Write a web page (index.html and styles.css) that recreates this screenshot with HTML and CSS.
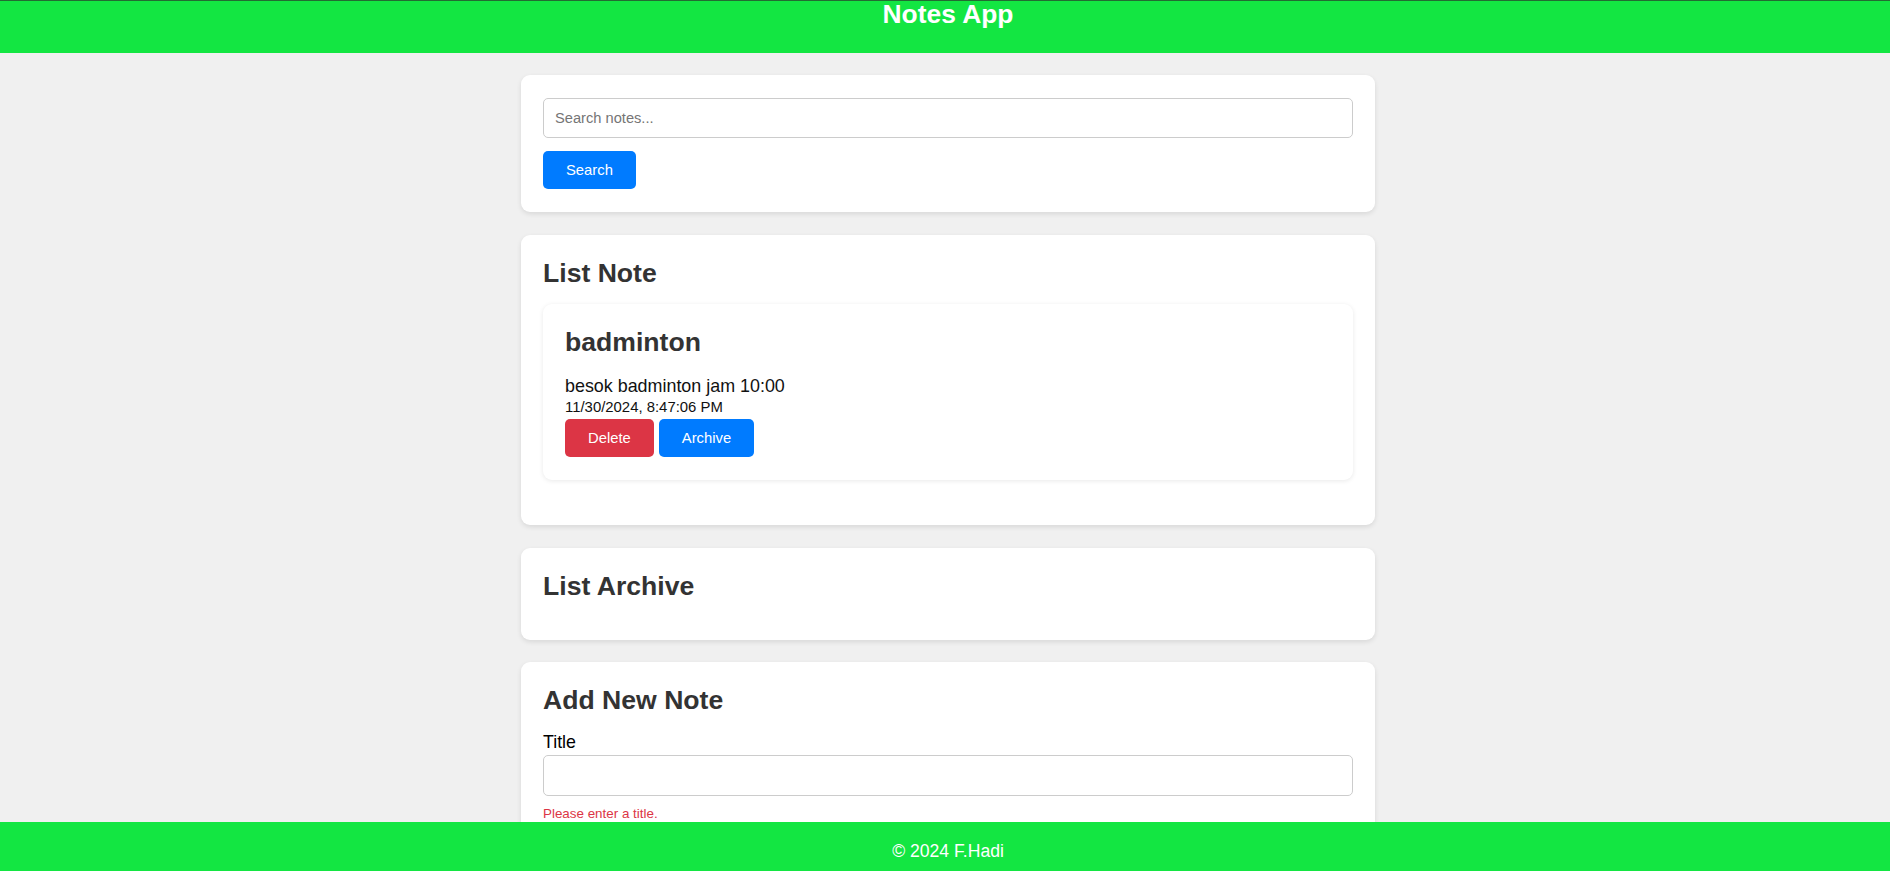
FILE: index.html
```html
<!DOCTYPE html>
<html lang="en">
<head>
<meta charset="utf-8">
<title>Notes App</title>
<link rel="stylesheet" href="styles.css">
</head>
<body>
<header class="app-header">
  <h1 class="app-title">Notes App</h1>
</header>
<div class="page">
  <main class="container">
    <section class="card search-card">
      <input class="text-input search-input" type="text" placeholder="Search notes...">
      <div class="btn-row"><button class="btn btn-blue">Search</button></div>
    </section>

    <section class="card">
      <h2 class="card-title">List Note</h2>
      <div class="note">
        <h3 class="note-title">badminton</h3>
        <p class="note-body">besok badminton jam 10:00<br><small class="note-date">11/30/2024, 8:47:06 PM</small></p>
        <div class="note-actions">
          <button class="btn btn-red">Delete</button>
          <button class="btn btn-blue">Archive</button>
        </div>
      </div>
    </section>

    <section class="card">
      <h2 class="card-title">List Archive</h2>
    </section>

    <section class="card">
      <h2 class="card-title">Add New Note</h2>
      <label class="field-label" for="title">Title</label>
      <input class="text-input title-input" id="title" type="text">
      <p class="field-error">Please enter a title.</p>
    </section>
  </main>
</div>
<footer class="app-footer">© 2024 F.Hadi</footer>
</body>
</html>
```
FILE: styles.css
```css
html, body {
  margin: 0;
  padding: 0;
}
body {
  background: #f0f0f0;
  font-family: "Liberation Sans", Arial, sans-serif;
  color: #111;
  font-size: 17.6px;
}
.app-header {
  background: #13e642;
  border-top: 1px solid #236b33;
  height: 52px;
  text-align: center;
  padding-left: 6px;
}
.app-title {
  margin: 0;
  color: #fff;
  font-size: 26.4px;
  line-height: 26px;
  font-weight: bold;
}
.page {
  padding-left: 6px;
}
.container {
  max-width: 854px;
  margin: 22px auto 0;
}
.card {
  background: #fff;
  border-radius: 9px;
  box-shadow: 0 2px 5px rgba(0, 0, 0, 0.1);
  padding: 23px 22px;
  margin-bottom: 22.5px;
}
.search-card {
  display: flex;
  flex-direction: column;
}
.text-input {
  display: block;
  width: 100%;
  box-sizing: border-box;
  border: 1px solid #ccc;
  border-radius: 5px;
  padding: 0 11px;
  font-family: "Liberation Sans", Arial, sans-serif;
  font-size: 14.67px;
  color: #111;
  background: #fff;
  outline: none;
}
.text-input::placeholder {
  color: #757575;
}
.search-input {
  height: 40px;
  margin-bottom: 12.5px;
}
.btn-row {
  display: flex;
}
.btn {
  font-family: "Liberation Sans", Arial, sans-serif;
  font-size: 14.8px;
  line-height: 16.7px;
  color: #fff;
  border: none;
  border-radius: 5px;
  padding: 11px 23px;
  cursor: pointer;
}
.btn-blue {
  background: #007bff;
}
.btn-red {
  background: #dc3545;
}
.card-title {
  margin: 0 0 16px;
  font-size: 26.6px;
  line-height: 30.4px;
  font-weight: bold;
  color: #333;
}
.note {
  background: #fff;
  border-radius: 9px;
  box-shadow: 0 1px 5px rgba(0, 0, 0, 0.09);
  padding: 23px 22px 22.6px;
  margin-bottom: 22px;
}
.note-title {
  margin: 0 0 18.3px;
  font-size: 26.6px;
  line-height: 30.4px;
  font-weight: bold;
  color: #333;
}
.note-body {
  margin: 0;
  font-size: 17.9px;
  line-height: 20.24px;
  color: #111;
}
.note-date {
  font-size: 14.9px;
}
.note-actions {
  display: flex;
  gap: 5px;
  margin-top: 1.5px;
}
.field-label {
  display: block;
  font-size: 17.8px;
  line-height: 20.24px;
  color: #000;
}
.title-input {
  height: 41.4px;
  margin-top: 2.5px;
}
.field-error {
  margin: 10px 0 0;
  font-size: 13.4px;
  line-height: 15.2px;
  color: #dc3545;
}
.app-footer {
  position: fixed;
  left: 0;
  right: 0;
  bottom: 0;
  height: 49.3px;
  box-sizing: border-box;
  padding: 19px 0 0 6px;
  background: #13e642;
  color: #fff;
  text-align: center;
  line-height: 20.24px;
  font-size: 17.6px;
}
```
